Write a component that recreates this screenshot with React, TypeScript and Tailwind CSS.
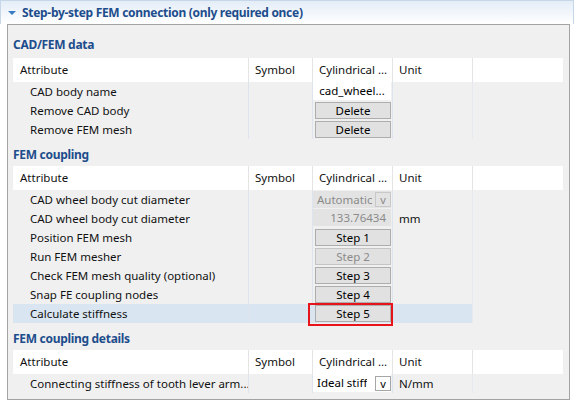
import React from 'react'

const font = { fontFamily: '"Noto Sans", "Liberation Sans", sans-serif' }

type Cell =
  | { kind: 'text'; value: string }
  | { kind: 'button'; label: string; disabled?: boolean; marked?: boolean }
  | { kind: 'combo'; label: string; disabled?: boolean }
  | { kind: 'number'; value: string }
  | { kind: 'none' }

type Row = { label: string; cell: Cell; unit?: string; selected?: boolean }

const sections: { title: string; rows: Row[] }[] = [
  {
    title: 'CAD/FEM data',
    rows: [
      { label: 'CAD body name', cell: { kind: 'text', value: 'cad_wheel...' } },
      { label: 'Remove CAD body', cell: { kind: 'button', label: 'Delete' } },
      { label: 'Remove FEM mesh', cell: { kind: 'button', label: 'Delete' } },
    ],
  },
  {
    title: 'FEM coupling',
    rows: [
      { label: 'CAD wheel body cut diameter', cell: { kind: 'combo', label: 'Automatic', disabled: true } },
      { label: 'CAD wheel body cut diameter', cell: { kind: 'number', value: '133.76434' }, unit: 'mm' },
      { label: 'Position FEM mesh', cell: { kind: 'button', label: 'Step 1' } },
      { label: 'Run FEM mesher', cell: { kind: 'button', label: 'Step 2', disabled: true } },
      { label: 'Check FEM mesh quality (optional)', cell: { kind: 'button', label: 'Step 3' } },
      { label: 'Snap FE coupling nodes', cell: { kind: 'button', label: 'Step 4' } },
      { label: 'Calculate stiffness', cell: { kind: 'button', label: 'Step 5', marked: true }, selected: true },
    ],
  },
  {
    title: 'FEM coupling details',
    rows: [
      {
        label: 'Connecting stiffness of tooth lever arm...',
        cell: { kind: 'combo', label: 'Ideal stiff' },
        unit: 'N/mm',
      },
    ],
  },
]

const cols = 'grid grid-cols-[235px_64px_80px_80px_1fr]'

function Widget({ cell }: { cell: Cell }) {
  switch (cell.kind) {
    case 'text':
      return (
        <div className="mr-[1px] flex h-[18px] items-center justify-center bg-white text-black">
          {cell.value}
        </div>
      )
    case 'button':
      return (
        <div className="relative h-full">
          <div
            className={
              'ml-[2px] mr-[1px] mt-[1px] flex h-[17px] items-center justify-center border bg-[#e1e1e1] ' +
              (cell.disabled ? 'border-[#c4c4c4] text-[#8a8a8a]' : 'border-[#adadad] text-black')
            }
          >
            {cell.label}
          </div>
          {cell.marked && (
            <div className="absolute left-[-5px] top-[-2px] h-[23px] w-[85px] border-2 border-[#e8141b]" />
          )}
        </div>
      )
    case 'combo':
      return (
        <div
          className={
            'mr-[1px] flex h-[17px] items-center justify-between pl-[4px] ' +
            (cell.disabled ? 'mt-[1px] bg-[#e3e3e3] text-[#8a8a8a]' : 'h-[18px] bg-white text-black')
          }
        >
          <span className="overflow-hidden whitespace-nowrap">{cell.label}</span>
          <span
            className={
              'flex h-[15px] w-[16px] shrink-0 items-center justify-center border text-[11px] leading-none ' +
              (cell.disabled ? 'border-[#c8c8c8] text-[#8a8a8a]' : 'border-[#a6a6a6] bg-white text-black')
            }
          >
            v
          </span>
        </div>
      )
    case 'number':
      return (
        <div className="mr-[1px] flex h-[17px] items-center justify-end bg-[#e3e3e3] pr-[5px] text-[#8a8a8a]">
          {cell.value}
        </div>
      )
    default:
      return null
  }
}

function Section({ title, rows, first }: { title: string; rows: Row[]; first?: boolean }) {
  return (
    <div>
      <div
        className={
          'flex items-end text-[12px] font-bold leading-[16px] tracking-[-0.3px] text-[#1d4d8c] ' +
          (first ? 'h-[33px] pb-[5px]' : 'h-[27px] pb-[3px]')
        }
      >
        {title}
      </div>
      <div className={cols + ' h-[24px] items-center bg-white text-[#111]'}>
        <div className="pl-[7px]">Attribute</div>
        <div className="flex h-full items-center border-l border-[#e4e4e4] pl-[6px]">Symbol</div>
        <div className="flex h-full items-center border-l border-[#e4e4e4] pl-[6px]">Cylindrical ...</div>
        <div className="flex h-full items-center border-l border-[#e4e4e4] pl-[6px]">Unit</div>
        <div className="h-full border-l border-[#e4e4e4]" />
      </div>
      {rows.map((r, i) => {
        const bg = r.selected ? 'bg-[#d9e6f2]' : ''
        return (
          <div key={i} className={cols + ' h-[19px] text-[#111]'}>
            <div className={'flex items-center whitespace-nowrap pl-[17px] ' + bg}>{r.label}</div>
            <div className={'border-l border-[#dde4ed] ' + bg} />
            <div className={'border-l border-[#dde4ed] ' + bg}>
              <Widget cell={r.cell} />
            </div>
            <div className={'flex items-center border-l border-[#dde4ed] pl-[6px] ' + bg}>{r.unit}</div>
            <div className="border-l border-[#e6e9ee]" />
          </div>
        )
      })}
    </div>
  )
}

export default function App() {
  return (
    <div className="h-[407px] w-[576px] overflow-hidden bg-white text-[11.5px]" style={font}>
      <div className="mr-[2px] flex h-[24px] items-center border-x border-t border-[#c6d7e9] bg-gradient-to-b from-[#e4edf7] to-white">
        <svg width="8" height="6" viewBox="0 0 8 6" className="ml-[7px] mr-[6px]">
          <path d="M0 1 L8 1 L4 5 Z" fill="#3a7cc4" />
        </svg>
        <span className="text-[12px] font-bold tracking-[-0.3px] text-[#1d4d8c]">
          Step-by-step FEM connection (only required once)
        </span>
      </div>
      <div className="ml-[7px] h-[376px] w-[563px] border border-[#a3a3a3] bg-[#f0f0f0] pl-[5px] pr-[6px]">
        {sections.map((s, i) => (
          <Section key={i} title={s.title} rows={s.rows} first={i === 0} />
        ))}
      </div>
    </div>
  )
}
